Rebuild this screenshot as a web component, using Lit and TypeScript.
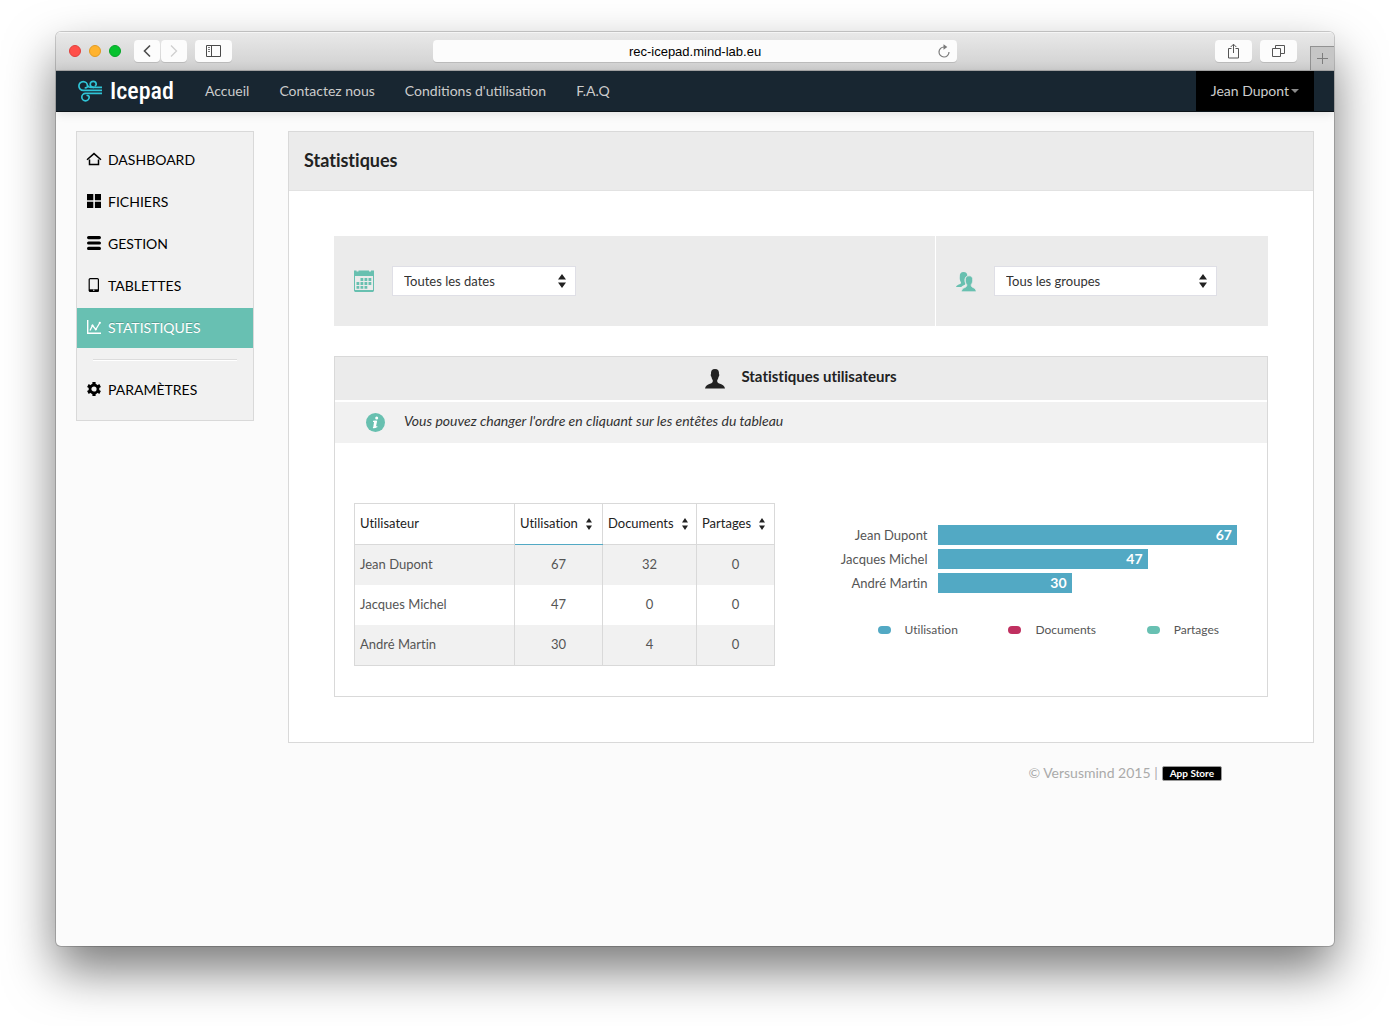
import { LitElement, html, css, svg, nothing } from "lit";
import { customElement, state } from "lit/decorators.js";
import { classMap } from "lit/directives/class-map.js";
import { styleMap } from "lit/directives/style-map.js";

type Metric = "utilisation" | "documents" | "partages";

interface UserStats {
  name: string;
  utilisation: number;
  documents: number;
  partages: number;
}

const USERS: UserStats[] = [
  { name: "Jean Dupont", utilisation: 67, documents: 32, partages: 0 },
  { name: "Jacques Michel", utilisation: 47, documents: 0, partages: 0 },
  { name: "André Martin", utilisation: 30, documents: 4, partages: 0 },
];

const METRICS: { key: Metric; label: string }[] = [
  { key: "utilisation", label: "Utilisation" },
  { key: "documents", label: "Documents" },
  { key: "partages", label: "Partages" },
];

const icon = (width: number, height: number, body: unknown) => html`
  <svg width=${width} height=${height} viewBox="0 0 ${width} ${height}" fill="none" aria-hidden="true">${body}</svg>
`;

const ICONS = {
  back: icon(10, 14, svg`<path d="M8 1.5 2.5 7 8 12.5" stroke="#4c4c4c" stroke-width="1.6"/>`),
  forward: icon(10, 14, svg`<path d="M2 1.5 7.5 7 2 12.5" stroke="#cfcfcf" stroke-width="1.3"/>`),
  sidebar: icon(15, 12, svg`
    <path d="M.5.5h14v11H.5zM5.500 .5v11" stroke="#4a4a4a"/>
    <path d="M2 2.500h2M2 4.500h2M2 6.500h2" stroke="#777"/>`),
  reload: icon(12, 14, svg`
    <path d="M6.200 3A5 5 0 1 0 11 8" stroke="#7a7a7a" stroke-width="1.200"/>
    <path d="M5.500 .2 9.300 3 5.500 5.800z" fill="#7a7a7a"/>`),
  share: icon(11, 16, svg`
    <path d="M3.500 5.500H.5v9.500h10V5.500h-3M5.500 10V1.500M2.700 4 5.500 1.200 8.300 4" stroke="#555"/>`),
  tabs: icon(13, 12, svg`
    <path d="M.5 3.500h8v8h-8zM3.500 3V.5h9v8H9" stroke="#555"/>`),
  plus: icon(11, 11, svg`<path d="M5.500 0v11M0 5.500h11" stroke="#7d7d7d"/>`),
  home: icon(16, 14, svg`
    <path d="M1 7.800 8 1.600 15 7.800M3.500 7.500v5h9v-5" stroke="currentColor" stroke-width="1.500"/>`),
  files: icon(14, 14, svg`
    <path d="M0 0h6.300v6.200H0zM7.900 0h6.100v6.200H7.900zM0 7.800h6.300V14H0zM7.900 7.800h6.100V14H7.900z" fill="currentColor"/>`),
  manage: icon(14, 14, svg`
    <path d="M1.600 1.600h10.800M1.600 7h10.800M1.600 12.400h10.800" stroke="currentColor" stroke-width="3.200" stroke-linecap="round"/>`),
  tablet: icon(14, 14, svg`
    <rect x="2.200" y=".6" width="9.200" height="12.800" rx="1" stroke="currentColor" stroke-width="1.200"/>
    <path d="M2 11.300h9.500v2.200H2z" fill="currentColor"/><circle cx="6.800" cy="12.300" r=".7" fill="#f1f1f1"/>`),
  chart: icon(14, 14, svg`
    <path d="M.7 0v13.300H14" stroke="currentColor" stroke-width="1.400"/>
    <path d="M3 10.500 5.500 5.500 8.800 9.500 13 2.500" stroke="currentColor" stroke-width="1.300"/>
    <circle cx="5.500" cy="5.500" r="1.100" fill="currentColor"/><circle cx="8.800" cy="9.300" r="1.100" fill="currentColor"/><circle cx="12.800" cy="2.800" r="1.100" fill="currentColor"/>`),
  gear: icon(14, 14, svg`
    <circle cx="7" cy="7" r="4" stroke="currentColor" stroke-width="2.800"/>
    <path d="M7 0v2.500M7 11.500V14M.9 3.500l2.200 1.300M10.900 9.200l2.200 1.300M.9 10.500l2.200-1.300M10.900 4.800l2.200-1.300" stroke="currentColor" stroke-width="3.200"/>`),
  calendar: icon(20, 22, svg`
    <path d="M.5 2.500h19v18.700H.5z" stroke="#68c0b0"/>
    <path d="M0 .5h2.500v1h2V.5H15v1h2V.5h3V6H0z" fill="#68c0b0"/>
    <path d="M1 20h18v2H1z" fill="#68c0b0"/>
    <path d="M6.500 9.500H18M2.500 13.500H18M2.500 17.300H14" stroke="#68c0b0" stroke-width="2.800" stroke-dasharray="2.800 1.200"/>`),
  group: icon(20, 22, svg`
    <g transform="translate(-.5 2)" fill="#68c0b0">
      <path d="M8 0c2.700 0 3.900 1.400 3.800 3.800-2.200 1-3.100 3-2.700 5.700.1 1 .4 1.600.8 2.200-.1 1.500-2.900 1.700-4.200 3.300H.5c.3-1.700 2.200-2.200 4.200-3.100.9-.4 1-1.100.6-1.900C4.400 8.900 4.100 7.300 4.300 4.600 4.200 1.600 5.300 0 8 0z"/>
      <path d="M13.600 3.800c2.700 0 3.800 1.600 3.600 4.400-.1 2.200-.7 3.500-1.500 4.500-.1 1.700.5 2.200 1.800 2.800 1.600.7 3 1.500 3.300 4.300H5.800c.3-2.800 1.900-3.600 3.600-4.300 1.300-.6 2-1.100 1.900-2.800-.9-1-1.400-2.300-1.500-4.500-.2-2.800 1.100-4.400 3.800-4.400z" stroke="#ebebeb" stroke-width=".8"/>
    </g>`),
  user: icon(20, 20, svg`
    <path d="M10 0c3 0 4.300 1.900 4 5 .5.600.3 2.200-.4 2.700-.3 1.600-.8 2.700-1.400 3.500-.2 2 .6 2.800 2.800 3.600 2.700 1 4.500 2.200 5 4.700H0c.5-2.500 2.300-3.700 5-4.700 2.200-.8 3-1.600 2.800-3.600-.6-.8-1.100-1.900-1.400-3.500C5.700 7.200 5.500 5.600 6 5c-.3-3.100 1-5 4-5z" fill="#222"/>`),
  info: icon(19, 19, svg`
    <circle cx="9.500" cy="9.500" r="9.500" fill="#68c0b0"/>
    <circle cx="10.700" cy="4.900" r="1.500" fill="#fff"/>
    <path d="M7 8.400h3.500M7 14.400c1.700.7 2.600.2 4.300-.8" stroke="#fff" stroke-width="1.200"/>
    <path d="M8.200 7.800h3l-1.500 7H7.200z" fill="#fff"/>`),
  sortLarge: icon(8, 14, svg`<path d="M4 0 8 5.500H0zM0 8.500h8L4 14z" fill="#222"/>`),
  sortSmall: icon(6, 12, svg`<path d="M3 0 6 4.500H0zM0 7.500h6L3 12z" fill="#222"/>`),
  caret: icon(8, 4, svg`<path d="M0 0h8L4 4z" fill="#8a8a8a"/>`),
  logo: icon(24, 22, svg`
    <g stroke="#2fc4d6" stroke-width="1.700" fill="none">
      <path d="M24 10.300H5.200A4.300 4.300 0 1 1 9.500 6c0 1.500-1.400 2.300-2.800 1.600"/>
      <path d="M24 7.300h-8.800A3 3 0 1 1 18.200 4.300c0 .9-.7 1.400-1.500 1.200"/>
      <path d="M9.500 5.500c.5 1.400 1.500 1.900 3.500 1.800h3"/>
      <path d="M24 13.400H7.500a3.700 3.700 0 1 0 3.700 3.700c0-1.400-1.500-2-2.600-1.300"/>
    </g>`),
};

@customElement("browser-toolbar")
class BrowserToolbar extends LitElement {
  static styles = css`
    :host { display: block; font-family: "Liberation Sans", Arial, sans-serif; }
    .bar {
      display: grid;
      grid-template-columns: 1fr 41% 1fr;
      align-items: center;
      height: 39px;
      box-sizing: border-box;
      background: linear-gradient(#e9e9e9, #d0d0d0);
      box-shadow: inset 0 1px 0 #f5f5f5;
      border-bottom: 1px solid #a9a9a9;
    }
    .left, .right, .pair, .lights { display: flex; align-items: center; }
    .left { padding-left: 13px; }
    .lights { gap: 8px; margin-right: 13px; }
    .light { width: 12px; height: 12px; border-radius: 50%; box-sizing: border-box; }
    .close { background: #ff4f4a; border: 1px solid #e0403c; }
    .reduce { background: #ffb32e; border: 1px solid #e29b22; }
    .enlarge { background: #07c22f; border: 1px solid #06a528; }
    .pair { gap: 1px; margin-right: 8px; }
    button {
      display: flex;
      align-items: center;
      justify-content: center;
      height: 22px;
      padding: 0;
      border: 0;
      border-radius: 4px;
      background: #fcfcfc;
      box-shadow: 0 1px 0 #bcbcbc;
    }
    .narrow { width: 26px; }
    .wide { width: 37px; }
    .address {
      display: grid;
      grid-template-columns: 12px 1fr 12px;
      align-items: center;
      height: 22px;
      padding: 0 7px;
      border-radius: 4px;
      background: #fcfcfc;
      box-shadow: 0 1px 0 #bcbcbc;
    }
    .url {
      grid-column: 2;
      min-width: 0;
      border: 0;
      padding: 1px 0 0;
      background: none;
      text-align: center;
      font: 13px "Liberation Sans", Arial, sans-serif;
      color: #000;
    }
    .reload { width: 12px; background: none; box-shadow: none; }
    .right { justify-content: flex-end; gap: 8px; align-self: stretch; }
    .new-tab {
      align-self: flex-end;
      width: 24px;
      height: 24px;
      margin-left: 5px;
      border-radius: 0;
      border: 1px solid #929292;
      border-width: 1px 0 0 1px;
      background: #c6c6c6;
      box-shadow: none;
    }
  `;

  render() {
    return html`
      <div class="bar">
        <div class="left">
          <div class="lights">
            <span class="light close"></span><span class="light reduce"></span><span class="light enlarge"></span>
          </div>
          <div class="pair">
            <button class="narrow" aria-label="Précédent">${ICONS.back}</button>
            <button class="narrow" aria-label="Suivant">${ICONS.forward}</button>
          </div>
          <button class="wide" aria-label="Barre latérale">${ICONS.sidebar}</button>
        </div>
        <div class="address">
          <input class="url" type="text" aria-label="Adresse" value="rec-icepad.mind-lab.eu" />
          <button class="reload" aria-label="Recharger">${ICONS.reload}</button>
        </div>
        <div class="right">
          <button class="wide" aria-label="Partager">${ICONS.share}</button>
          <button class="wide" aria-label="Onglets">${ICONS.tabs}</button>
          <button class="new-tab" aria-label="Nouvel onglet">${ICONS.plus}</button>
        </div>
      </div>
    `;
  }
}

@customElement("site-nav")
class SiteNav extends LitElement {
  static styles = css`
    :host { display: block; position: relative; }
    .bar {
      display: flex;
      align-items: stretch;
      height: 40px;
      padding: 0 20px 0 22px;
      background: #182631;
      border-bottom: 1px solid #0c141a;
      box-shadow: 0 1px 10px rgba(0, 0, 0, 0.12);
      font: 14px/40px Lato, sans-serif;
    }
    a { color: #ccc; text-decoration: none; }
    .brand {
      display: flex;
      align-items: center;
      gap: 8px;
      width: 112px;
      color: #fff;
      font: 500 24px/40px "Roboto Condensed", "Liberation Sans Narrow", "DejaVu Sans Condensed", sans-serif;
    }
    .links { display: flex; list-style: none; margin: 0; padding: 0; flex: 1; }
    .links a { display: block; padding: 0 15px; }
    .account {
      display: flex;
      align-items: center;
      gap: 2px;
      padding: 0 15px;
      border: 0;
      background: #000;
      color: #ccc;
      font: inherit;
    }
  `;

  render() {
    return html`
      <nav class="bar">
        <a class="brand" href="#accueil">${ICONS.logo}<span>Icepad</span></a>
        <ul class="links">
          <li><a href="#accueil">Accueil</a></li>
          <li><a href="#contact">Contactez nous</a></li>
          <li><a href="#conditions">Conditions d'utilisation</a></li>
          <li><a href="#faq">F.A.Q</a></li>
        </ul>
        <button class="account" aria-haspopup="menu">Jean Dupont${ICONS.caret}</button>
      </nav>
    `;
  }
}

@customElement("side-menu")
class SideMenu extends LitElement {
  static styles = css`
    :host { display: block; }
    .menu {
      padding: 8px 0 10px;
      border: 1px solid #d9d9d9;
      background: #f1f1f1;
      font: 14px/40px Lato, sans-serif;
    }
    .list { display: flex; flex-direction: column; gap: 2px; margin: 0; padding: 0; list-style: none; }
    .item { display: grid; grid-template-columns: 14px 1fr; column-gap: 7px; padding-left: 10px; color: #000; text-decoration: none; }
    .item svg { align-self: center; justify-self: center; margin-bottom: 2px; }
    .active { background: #68c0b2; color: #fff; text-shadow: 0 -1px 0 rgba(0, 0, 0, 0.2); }
    .rule { height: 1px; margin: 11px 16px 9px; background: #dcdcdc; border-bottom: 1px solid #fff; }
  `;

  private entry(label: string, glyph: unknown, active = false) {
    return html`
      <li>
        <a class=${classMap({ item: true, active })} href="#${label.toLowerCase()}" aria-current=${active ? "page" : nothing}>
          ${glyph}<span>${label}</span>
        </a>
      </li>
    `;
  }

  render() {
    return html`
      <nav class="menu">
        <ul class="list">
          ${this.entry("DASHBOARD", ICONS.home)}
          ${this.entry("FICHIERS", ICONS.files)}
          ${this.entry("GESTION", ICONS.manage)}
          ${this.entry("TABLETTES", ICONS.tablet)}
          ${this.entry("STATISTIQUES", ICONS.chart, true)}
        </ul>
        <div class="rule"></div>
        <ul class="list">${this.entry("PARAMÈTRES", ICONS.gear)}</ul>
      </nav>
    `;
  }
}

@customElement("stats-filters")
class StatsFilters extends LitElement {
  static styles = css`
    :host { display: block; }
    .filters { display: grid; grid-template-columns: 601fr 332fr; gap: 1px; font: 13px/18px Lato, sans-serif; }
    .cell { display: flex; align-items: center; gap: 18px; padding: 30px 20px; background: #ebebeb; }
    .picker { display: grid; align-items: center; }
    .picker select, .picker svg { grid-area: 1 / 1; }
    .picker svg { justify-self: end; margin-right: 10px; pointer-events: none; }
    select {
      appearance: none;
      height: 30px;
      padding: 0 28px 0 11px;
      border: 1px solid #dfdfe6;
      border-radius: 0;
      background: #fff;
      color: #333;
      font: inherit;
      font-variant-ligatures: none;
    }
    .dates { width: 184px; }
    .groups { width: 223px; }
  `;

  render() {
    return html`
      <div class="filters">
        <div class="cell">
          ${ICONS.calendar}
          <div class="picker">
            <select class="dates" aria-label="Dates"><option>Toutes les dates</option></select>
            ${ICONS.sortLarge}
          </div>
        </div>
        <div class="cell">
          ${ICONS.group}
          <div class="picker">
            <select class="groups" aria-label="Groupes"><option>Tous les groupes</option></select>
            ${ICONS.sortLarge}
          </div>
        </div>
      </div>
    `;
  }
}

@customElement("user-stats")
class UserStatsPanel extends LitElement {
  static styles = css`
    :host { display: block; color: #555; font-family: Lato, sans-serif; font-size: 13px; line-height: 20px; }
    .box { border: 1px solid #d9d9d9; background: #fff; }
    .title {
      display: flex;
      align-items: center;
      justify-content: center;
      gap: 16px;
      height: 43px;
      margin: 0;
      background: #ebebeb;
      color: #222;
      font-size: 15px;
      font-weight: 700;
    }
    .title span { padding-bottom: 6px; }
    .hint {
      display: flex;
      align-items: center;
      gap: 19px;
      height: 41px;
      margin: 2px 0 0;
      padding-left: 31px;
      background: #f1f1f1;
      color: #333;
      font-size: 14px;
      font-style: italic;
    }
    .hint span { padding-bottom: 4px; }
    .data { display: grid; grid-template-columns: 1fr 1fr; padding: 60px 30px 30px 19px; align-items: start; }
    table { width: 421px; border: 1px solid #d9d9d9; border-collapse: collapse; table-layout: fixed; }
    .name-col { width: 160px; }
    .use-col { width: 88px; }
    .doc-col { width: 94px; }
    .share-col { width: 78px; }
    th, td { height: 40px; padding: 0 0 2px; text-align: center; border: 1px solid #d9d9d9; border-width: 0 1px; box-sizing: border-box; }
    thead th { height: 41px; border-bottom: 1px solid #d9d9d9; color: #222; font-weight: 400; }
    thead .sorted { border-bottom-color: #52a9c4; }
    tbody th { font-weight: 400; }
    tbody tr:last-child > * { height: 41px; }
    .name { padding-left: 5px; text-align: left; }
    tbody tr:nth-child(odd) { background: #f1f1f1; }
    .sort {
      display: flex;
      align-items: center;
      gap: 8px;
      width: 100%;
      padding: 0 0 0 5px;
      border: 0;
      background: none;
      color: inherit;
      font: inherit;
    }
    .sort svg { margin-top: 2px; }
    .chart { padding: 22px 0 0 26px; }
    .row { display: grid; grid-template-columns: 106px 1fr; gap: 10px; margin-bottom: 4px; }
    .label { text-align: right; }
    .bar { background: #52a9c4; color: #fff; font-size: 14px; font-weight: 700; text-align: right; padding-right: 5px; box-sizing: border-box; }
    .legend { display: flex; justify-content: space-between; margin: 29px 0 0; padding: 0 18px 0 56px; list-style: none; font-size: 12px; line-height: 16px; }
    .legend li { display: flex; align-items: center; gap: 14px; }
    .dot { width: 13px; height: 8px; border-radius: 4px; }
    .utilisation { background: #52a9c4; }
    .documents { background: #c03060; }
    .partages { background: #68c0b2; }
  `;

  @state() private sortKey: Metric = "utilisation";

  render() {
    const rows = [...USERS].sort((a, b) => b[this.sortKey] - a[this.sortKey]);
    const top = Math.max(1, ...rows.map((r) => r[this.sortKey]));
    return html`
      <section class="box">
        <h2 class="title">${ICONS.user}<span>Statistiques utilisateurs</span></h2>
        <p class="hint">${ICONS.info}<span>Vous pouvez changer l'ordre en cliquant sur les entêtes du tableau</span></p>
        <div class="data">
          <table>
            <colgroup><col class="name-col" /><col class="use-col" /><col class="doc-col" /><col class="share-col" /></colgroup>
            <thead>
              <tr>
                <th class="name" scope="col">Utilisateur</th>
                ${METRICS.map(
                  (m) => html`
                    <th scope="col" class=${classMap({ sorted: m.key === this.sortKey })}>
                      <button class="sort" @click=${() => (this.sortKey = m.key)}>${m.label}${ICONS.sortSmall}</button>
                    </th>
                  `,
                )}
              </tr>
            </thead>
            <tbody>
              ${rows.map(
                (r) => html`
                  <tr>
                    <th class="name" scope="row">${r.name}</th>
                    ${METRICS.map((m) => html`<td>${r[m.key]}</td>`)}
                  </tr>
                `,
              )}
            </tbody>
          </table>
          <div class="chart">
            ${rows.map(
              (r) => html`
                <div class="row">
                  <span class="label">${r.name}</span>
                  <div class="bar" style=${styleMap({ width: `${(r[this.sortKey] / top) * 100}%` })}>${r[this.sortKey]}</div>
                </div>
              `,
            )}
            <ul class="legend">
              ${METRICS.map((m) => html`<li><span class="dot ${m.key}"></span>${m.label}</li>`)}
            </ul>
          </div>
        </div>
      </section>
    `;
  }
}

@customElement("app-root")
class AppRoot extends LitElement {
  static styles = css`
    :host {
      display: flex;
      min-height: 100vh;
      box-sizing: border-box;
      padding: 32px 56px 80px;
      background: #fff;
      font-family: Lato, sans-serif;
      font-variant-ligatures: none;
      overflow: hidden;
    }
    .window {
      flex: 1;
      min-width: 0;
      border-radius: 5px;
      overflow: hidden;
      background: #fbfbfb;
      box-shadow: 0 0 0 1px rgba(0, 0, 0, 0.18), 0 24px 50px rgba(0, 0, 0, 0.53);
    }
    .page { display: grid; grid-template-columns: 178px 1fr; column-gap: 34px; align-items: start; padding: 19px 20px; }
    .panel { border: 1px solid #d9d9d9; background: #fff; }
    .heading { margin: 0; padding: 0 15px 2px; background: #ebebeb; border-bottom: 1px solid #e2e2e2; color: #222; font-size: 18px; line-height: 56px; font-weight: 700; }
    .content { display: flex; flex-direction: column; gap: 30px; padding: 45px; }
    .footer {
      display: flex;
      align-items: center;
      justify-content: flex-end;
      gap: 4px;
      padding: 20px 92px 0 0;
      color: #aaa;
      font-size: 14px;
      line-height: 20px;
    }
    .store { padding: 0 7px; border: 1px solid #999; border-radius: 2px; background: #000; color: #fff; font-size: 10px; line-height: 13px; font-weight: 700; text-decoration: none; }
  `;

  render() {
    return html`
      <div class="window">
        <browser-toolbar></browser-toolbar>
        <site-nav></site-nav>
        <div class="page">
          <side-menu></side-menu>
          <div>
            <main class="panel">
              <h1 class="heading">Statistiques</h1>
              <div class="content">
                <stats-filters></stats-filters>
                <user-stats></user-stats>
              </div>
            </main>
            <footer class="footer">
              <span>© Versusmind 2015 |</span>
              <a class="store" href="#app-store">App Store</a>
            </footer>
          </div>
        </div>
      </div>
    `;
  }
}
